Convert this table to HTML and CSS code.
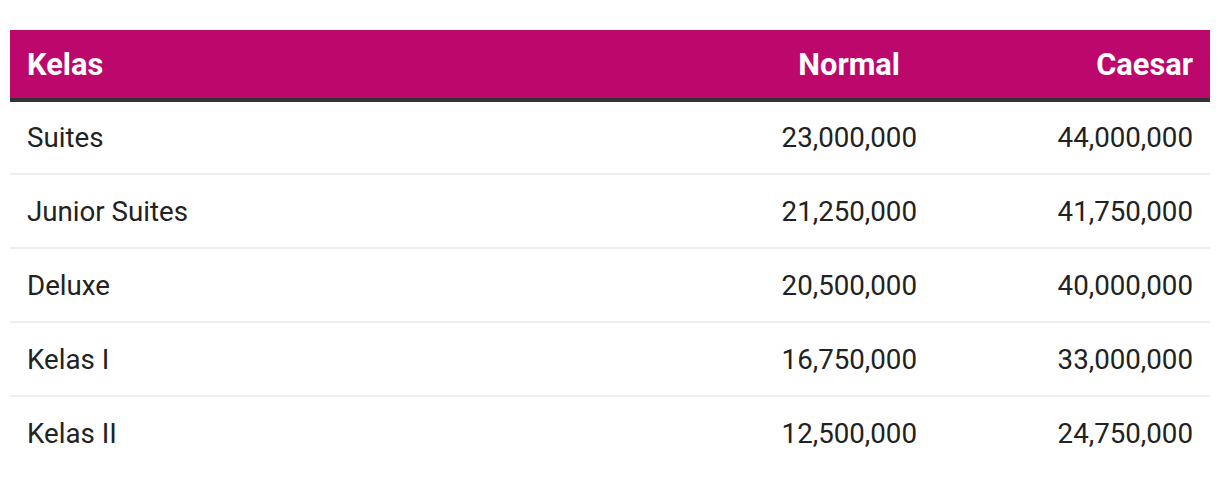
FILE: index.html
```html
<!DOCTYPE html>
<html lang="id">
<head>
<meta charset="utf-8">
<link rel="stylesheet" href="styles.css">
</head>
<body>
<table class="price-table">
  <thead>
    <tr><th class="col-name">Kelas</th><th class="col-num col-mid">Normal</th><th class="col-num col-last">Caesar</th></tr>
  </thead>
  <tbody>
    <tr><td>Suites</td><td class="num">23,000,000</td><td class="num">44,000,000</td></tr>
    <tr><td>Junior Suites</td><td class="num">21,250,000</td><td class="num">41,750,000</td></tr>
    <tr><td>Deluxe</td><td class="num">20,500,000</td><td class="num">40,000,000</td></tr>
    <tr><td>Kelas I</td><td class="num">16,750,000</td><td class="num">33,000,000</td></tr>
    <tr><td>Kelas II</td><td class="num">12,500,000</td><td class="num">24,750,000</td></tr>
  </tbody>
</table>
</body>
</html>
```

FILE: styles.css
```css
html, body {
  margin: 0;
  background: #ffffff;
}
body {
  padding: 30px 10px;
  font-family: Roboto, "Liberation Sans", sans-serif;
  color: #222222;
}
.price-table {
  width: 1200px;
  border-collapse: collapse;
  table-layout: fixed;
}
.price-table th {
  background: #bc086c;
  color: #ffffff;
  font-weight: 700;
  font-size: 30.8px;
  height: 70px;
  padding: 0 17px;
  text-align: left;
  border-bottom: 4px solid #333333;
  box-sizing: border-box;
}
.price-table th.col-num {
  text-align: right;
}
.price-table th.col-mid {
  padding-right: 34px;
}
.price-table th.col-name { width: 648px; }
.price-table th.col-last { width: 276px; }
.price-table td {
  font-size: 27.7px;
  height: 74px;
  padding: 0 17px;
  border-bottom: 2px solid #eeeeee;
  vertical-align: middle;
  box-sizing: border-box;
}
.price-table tbody tr:last-child td {
  border-bottom: none;
}
.price-table td.num {
  text-align: right;
}
```
